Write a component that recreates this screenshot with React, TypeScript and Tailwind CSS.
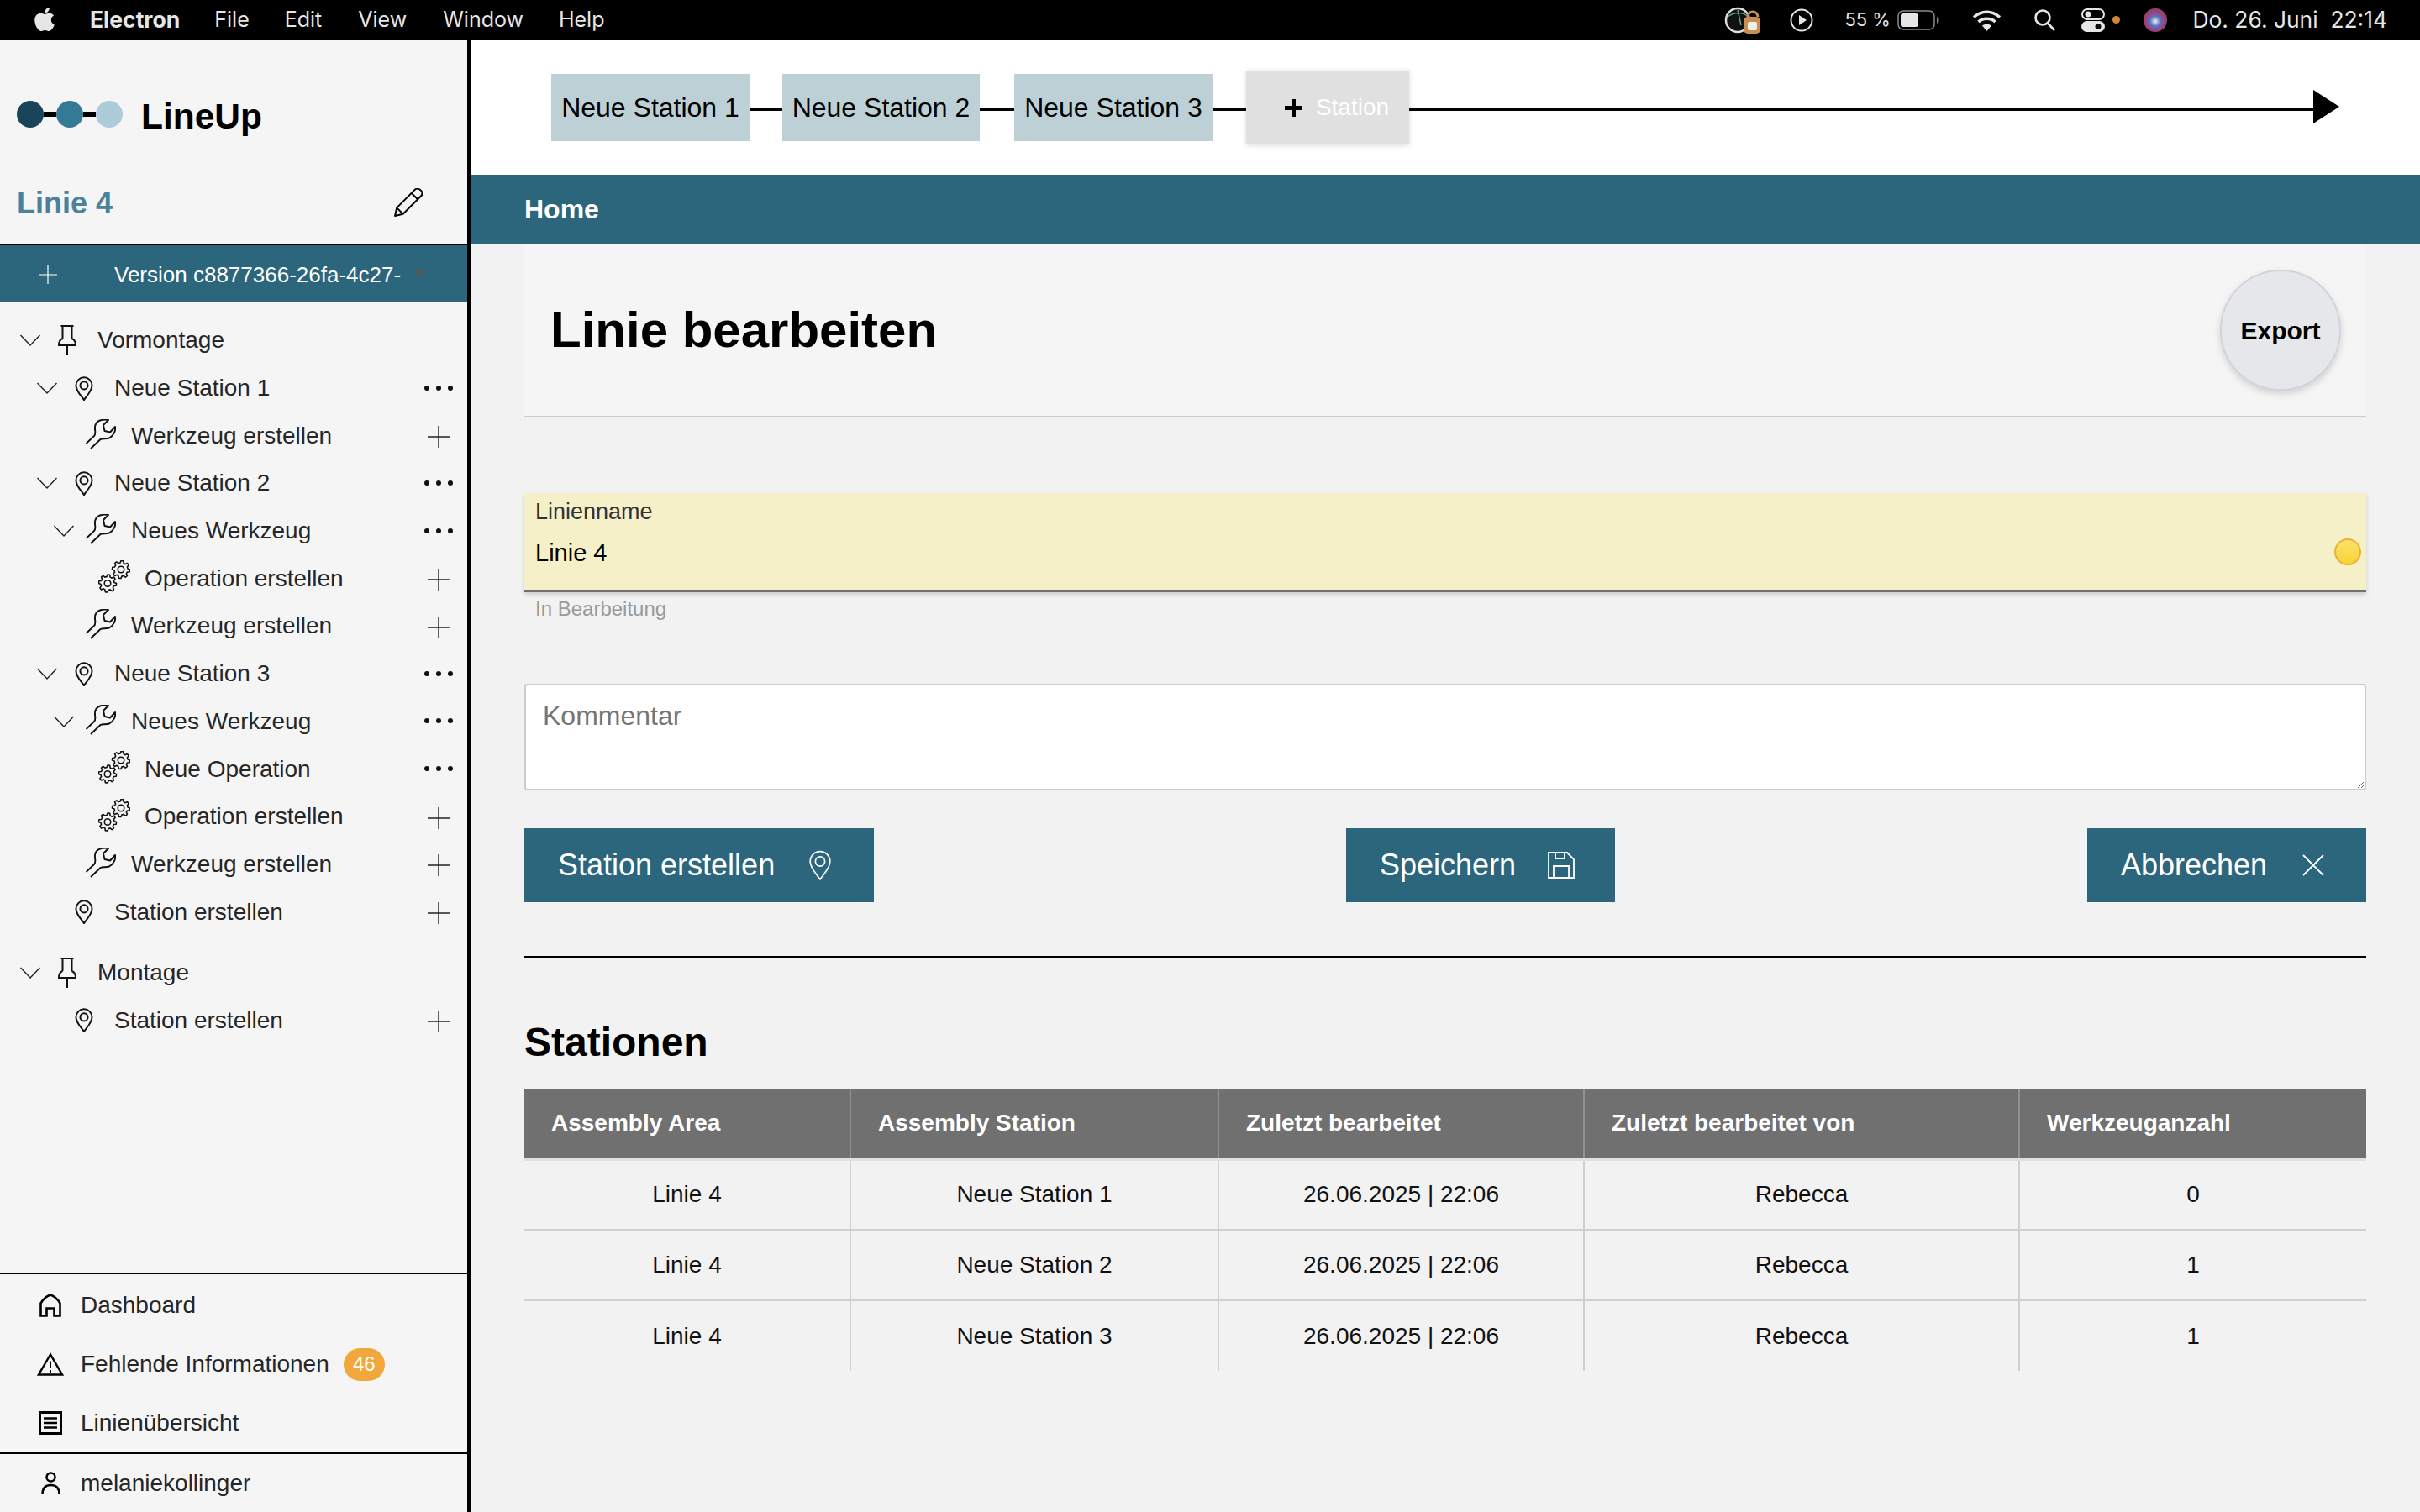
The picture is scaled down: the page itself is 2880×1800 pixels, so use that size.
import React from "react";
import { FaApple } from "react-icons/fa";

const SANS = "font-['Liberation_Sans',Arial,sans-serif]";

function Pin({ className = "" }: { className?: string }) {
  return (
    <svg viewBox="0 0 22 36" className={className} fill="none" stroke="currentColor" strokeWidth="2">
      <path d="M3.500 1h15M5.500 1v15M16.500 1v15M5.500 16C3 17 1 19.500 1 24h20c0-4.500-2-7-4.500-8M11 24v12" />
    </svg>
  );
}
function Marker({ className = "", sw = 2.2 }: { className?: string; sw?: number }) {
  return (
    <svg viewBox="0 0 24 32" className={className} fill="none" stroke="currentColor" strokeWidth={sw}>
      <path d="M12 31C8 25 1.500 19 1.500 12a10.500 10.500 0 0 1 21 0C22.500 19 16 25 12 31z" />
      <circle cx="12" cy="12" r="5" />
    </svg>
  );
}
function Wrench({ className = "" }: { className?: string }) {
  return (
    <svg viewBox="0 0 36 36" className={className} fill="none" stroke="currentColor" strokeWidth="1.900" strokeLinejoin="round">
      <path d="M.5 29 10 20C12 18 11.500 15 11 12 10.500 7 13 3 17 1.500 20 .5 24 .5 27 1L21 7 22.500 14 29 15.500 35 9C36 14 33 20 28 22.500 24 24 20 22.500 17.500 24L6 35" />
    </svg>
  );
}
function Gear({ cx, cy, r }: { cx: number; cy: number; r: number }) {
  const d = Array.from({ length: 48 }, (_, i) => {
    const a = (i / 48) * Math.PI * 2;
    const rad = i % 6 < 3 ? r : r * 0.76;
    return `${i ? "L" : "M"}${(cx + rad * Math.cos(a)).toFixed(2)} ${(cy + rad * Math.sin(a)).toFixed(2)}`;
  }).join(" ");
  return (
    <g>
      <path d={d + "z"} />
      <circle cx={cx} cy={cy} r={r * 0.36} />
    </g>
  );
}
function Gears({ className = "" }: { className?: string }) {
  return (
    <svg viewBox="0 0 38 39" className={className} fill="none" stroke="currentColor" strokeWidth="1.600" strokeLinejoin="round">
      <Gear cx={27} cy={11} r={10.500} />
      <Gear cx={11} cy={27.500} r={10.500} />
    </svg>
  );
}

type RowProps = {
  level: number;
  chevron?: boolean;
  icon: "pin" | "marker" | "wrench" | "gears";
  label: string;
  action?: "dots" | "plus";
};

function TreeRow({ level, chevron, icon, label, action }: RowProps) {
  const pad = ["pl-[24px]", "pl-[44px]", "pl-[64px]", "pl-[84px]"][level];
  return (
    <div className={`flex h-[56.7px] items-center ${pad} pr-[17px] text-[28px] text-[#262626]`}>
      <span className="flex w-[24px] shrink-0 items-center">
        {chevron && (
          <svg viewBox="0 0 24 14" className="h-[14px] w-[24px]" fill="none" stroke="#222" strokeWidth="1.400">
            <path d="M.5 1 12 13 23.500 1" />
          </svg>
        )}
      </span>
      {icon === "pin" && <Pin className="ml-[21px] mr-[25px] h-[36px] w-[22px] shrink-0 text-[#111]" />}
      {icon === "marker" && <Marker className="ml-[21px] mr-[25px] h-[29px] w-[22px] shrink-0 text-[#111]" />}
      {icon === "wrench" && <Wrench className="mb-[4px] ml-[14px] mr-[18px] h-[36px] w-[36px] shrink-0 text-[#111]" />}
      {icon === "gears" && <Gears className="mb-[4px] ml-[9px] mr-[17px] h-[39px] w-[38px] shrink-0 text-[#111]" />}
      <span className="flex-1 whitespace-nowrap">{label}</span>
      {action === "dots" && (
        <span className="flex w-[34px] justify-between pb-[1px]">
          <i className="h-[6px] w-[6px] rounded-full bg-[#111]" />
          <i className="h-[6px] w-[6px] rounded-full bg-[#111]" />
          <i className="h-[6px] w-[6px] rounded-full bg-[#111]" />
        </span>
      )}
      {action === "plus" && (
        <span className="mt-[3px] flex w-[34px] justify-center">
          <svg viewBox="0 0 26 26" className="h-[26px] w-[26px]" stroke="#222" strokeWidth="1.400">
            <path d="M13 0v26M0 13h26" />
          </svg>
        </span>
      )}
    </div>
  );
}

function NavRow({ icon, label, badge }: { icon: React.ReactNode; label: string; badge?: string }) {
  return (
    <div className="flex h-[70px] items-center pl-[44px] text-[28px] text-[#262626]">
      <span className="flex w-[32px] justify-center">{icon}</span>
      <span className="ml-[20px]">{label}</span>
      {badge && (
        <span className="ml-[17px] flex h-[39px] w-[49px] items-center justify-center rounded-[20px] bg-[#f2a73b] text-[24px] text-white">{badge}</span>
      )}
    </div>
  );
}

function Btn({ label, icon, w }: { label: string; icon: React.ReactNode; w: string }) {
  return (
    <button className={`flex h-[88px] items-center justify-between bg-[#2c667d] pl-[40px] text-[36px] text-white ${w}`}>
      <span>{label}</span>
      {icon}
    </button>
  );
}

const rows = ["Neue Station 1", "Neue Station 2", "Neue Station 3"];
const counts = ["0", "1", "1"];

export default function App() {
  return (
    <div className={`flex h-[1800px] w-[2880px] flex-col overflow-hidden bg-[#f2f2f2] ${SANS}`}>
      {/* macOS menu bar */}
      <div className="flex h-[48px] shrink-0 items-center justify-between bg-black text-[25px] text-[#e6e6e6]">
        <div className="flex items-center font-['Inter',sans-serif]">
          <FaApple className="ml-[38px] h-[32px] w-[30px] -translate-y-[1px] text-[#e6e6e6]" />
          <span className="ml-[39px] text-[26.500px] font-bold">Electron</span>
          <span className="ml-[41px]">File</span>
          <span className="ml-[42px]">Edit</span>
          <span className="ml-[43px]">View</span>
          <span className="ml-[43px]">Window</span>
          <span className="ml-[42px]">Help</span>
        </div>
        <div className="flex items-center font-['Inter',sans-serif]">
          <svg viewBox="0 0 44 36" className="h-[36px] w-[44px]">
            <circle cx="16" cy="18" r="14" fill="#111" stroke="#ddd" strokeWidth="2.500" />
            <path d="M4 14c8-6 18-6 25 0M16 6l4 18" stroke="#5aa38c" strokeWidth="1.500" fill="none" />
            <path d="M28 14a6 6 0 0 1 12 0" stroke="#c98f52" strokeWidth="3" fill="none" />
            <rect x="23" y="14" width="20" height="20" rx="5" fill="#c98f52" />
            <rect x="28" y="20" width="11" height="10" rx="2" fill="#eee" />
          </svg>
          <svg viewBox="0 0 28 28" className="ml-[34px] h-[28px] w-[28px]">
            <circle cx="14" cy="14" r="12.500" fill="none" stroke="#e6e6e6" strokeWidth="2" />
            <path d="M11 8l9 6-9 6z" fill="#e6e6e6" />
          </svg>
          <span className="ml-[37px] w-[52px] whitespace-nowrap text-[22px]">55 %</span>
          <svg viewBox="0 0 50 24" className="ml-[11px] h-[24px] w-[50px]">
            <rect x="1" y="1" width="43" height="22" rx="6" fill="none" stroke="#8a8a8a" strokeWidth="1.500" />
            <rect x="4" y="4" width="21" height="16" rx="3" fill="#e6e6e6" />
            <path d="M47 8c2 1 2 7 0 8z" fill="#8a8a8a" />
          </svg>
          <svg viewBox="0 0 35 26" className="ml-[39px] h-[26px] w-[35px]" fill="none" stroke="#e6e6e6" strokeWidth="3.500">
            <path d="M2 9.500C11 1 24 1 33 9.500M7.500 15C13 10 22 10 27.500 15" />
            <path d="M12 19.500c3-2.500 8-2.500 11 0L17.500 26z" fill="#e6e6e6" stroke="none" />
          </svg>
          <svg viewBox="0 0 25 26" className="ml-[39px] h-[26px] w-[25px]" fill="none" stroke="#e6e6e6" strokeWidth="2.600">
            <circle cx="10" cy="10" r="8.500" />
            <path d="M16 16.500 24 25" />
          </svg>
          <svg viewBox="0 0 28 28" className="ml-[31px] h-[28px] w-[28px]">
            <rect x="1" y="1" width="26" height="12" rx="6" fill="none" stroke="#e6e6e6" strokeWidth="2" />
            <circle cx="8" cy="7" r="3.500" fill="#e6e6e6" />
            <rect x="0" y="15" width="28" height="13" rx="6.500" fill="#e6e6e6" />
            <circle cx="20" cy="21.500" r="3.500" fill="#111" />
          </svg>
          <span className="ml-[9px] h-[9px] w-[9px] rounded-full bg-[#c98a32]" />
          <span className="ml-[28px] h-[28px] w-[28px] rounded-full bg-[radial-gradient(circle_at_50%_55%,#f2f2f2_0%,#5a6fc0_30%,#a8386a_60%,#2f7f80_100%)]" />
          <span className="ml-[30px] mr-[39px] whitespace-pre text-[26.400px]">Do. 26. Juni  22:14</span>
        </div>
      </div>

      <div className="flex min-h-0 flex-1">
        {/* Sidebar */}
        <aside className="flex w-[560px] shrink-0 flex-col border-r-[4px] border-black bg-[#f5f5f5]">
          <div className="flex h-[136px] shrink-0 items-start pl-[20px] pt-[72px]">
            <div className="flex items-center">
              <i className="h-[32px] w-[32px] rounded-full bg-[#1a4459]" />
              <i className="h-[6px] w-[15px] bg-black" />
              <i className="h-[32px] w-[32px] rounded-full bg-[#357a94]" />
              <i className="h-[6px] w-[15px] bg-black" />
              <i className="h-[32px] w-[32px] rounded-full bg-[#aecbda]" />
            </div>
            <span className="ml-[22px] -mt-[6px] text-[42.500px] font-bold leading-[50px] text-black">LineUp</span>
          </div>
          <div className="flex h-[106px] shrink-0 items-start justify-between pl-[20px] pr-[53px] pt-[38px]">
            <span className="text-[36px] font-bold leading-[40px] text-[#4a829b]">Linie 4</span>
            <svg viewBox="0 0 32 32" className="mt-[2px] h-[34px] w-[34px]" fill="none" stroke="#000" strokeWidth="1.900" strokeLinejoin="round">
              <path d="M1 31 3 22 23 2C25 0 28 .5 30 2.500S32 7 30 9L10 29zM3 22l7 7M19.500 5.500l7 7" />
            </svg>
          </div>
          <div className="flex h-[70px] shrink-0 items-center border-t-[2px] border-black bg-[#2c667d] pt-[2px] text-[26px] text-white">
            <svg viewBox="0 0 22 22" className="ml-[46px] h-[22px] w-[22px]" stroke="#fff" strokeWidth="1.200">
              <path d="M11 0v22M0 11h22" />
            </svg>
            <span className="ml-[68px] whitespace-nowrap">Version c8877366-26fa-4c27-</span>
            <i className="ml-[16px] h-0 w-0 border-x-[7px] border-t-[10px] border-x-transparent border-t-[#4d5a60]" />
          </div>

          <div className="flex-1 pt-[17px]">
            <TreeRow level={0} chevron icon="pin" label="Vormontage" />
            <TreeRow level={1} chevron icon="marker" label="Neue Station 1" action="dots" />
            <TreeRow level={2} icon="wrench" label="Werkzeug erstellen" action="plus" />
            <TreeRow level={1} chevron icon="marker" label="Neue Station 2" action="dots" />
            <TreeRow level={2} chevron icon="wrench" label="Neues Werkzeug" action="dots" />
            <TreeRow level={3} icon="gears" label="Operation erstellen" action="plus" />
            <TreeRow level={2} icon="wrench" label="Werkzeug erstellen" action="plus" />
            <TreeRow level={1} chevron icon="marker" label="Neue Station 3" action="dots" />
            <TreeRow level={2} chevron icon="wrench" label="Neues Werkzeug" action="dots" />
            <TreeRow level={3} icon="gears" label="Neue Operation" action="dots" />
            <TreeRow level={3} icon="gears" label="Operation erstellen" action="plus" />
            <TreeRow level={2} icon="wrench" label="Werkzeug erstellen" action="plus" />
            <TreeRow level={1} icon="marker" label="Station erstellen" action="plus" />
            <div className="h-[16px]" />
            <TreeRow level={0} chevron icon="pin" label="Montage" />
            <TreeRow level={1} icon="marker" label="Station erstellen" action="plus" />
          </div>

          <div className="border-t-[2px] border-black pt-[2px]">
            <NavRow
              label="Dashboard"
              icon={
                <svg viewBox="0 0 26 28" className="h-[28px] w-[26px]" fill="none" stroke="#000" strokeWidth="2.600">
                  <path d="M13 1.500C9 3 4 7 1.500 11.500V26.500H8.500V17.500H17.500V26.500H24.500V11.500C22 7 17 3 13 1.500z" />
                </svg>
              }
            />
            <NavRow
              label="Fehlende Informationen"
              badge="46"
              icon={
                <svg viewBox="0 0 32 28" className="h-[28px] w-[32px]" fill="none" stroke="#000" strokeWidth="2.400">
                  <path d="M16 2.500 2 26.500H30z" />
                  <path d="M16 10.500V19M16 21V24" strokeWidth="2" />
                </svg>
              }
            />
            <NavRow
              label="Linienübersicht"
              icon={
                <svg viewBox="0 0 28 28" className="h-[28px] w-[28px]" fill="none" stroke="#000" strokeWidth="3">
                  <rect x="1.500" y="1.500" width="25" height="25" />
                  <path d="M6 8.500H22M6 14H22M6 19.500H22" strokeWidth="2.400" />
                </svg>
              }
            />
          </div>
          <div className="flex h-[71px] items-center border-t-[2px] border-black pl-[44px] text-[28px] text-[#262626]">
            <span className="flex w-[32px] justify-center">
              <svg viewBox="0 0 23 27" className="h-[27px] w-[23px]" fill="none" stroke="#000" strokeWidth="2.500">
                <circle cx="11.500" cy="6.500" r="5" />
                <path d="M1.500 27C1.500 20 5 16 11.500 16S21.500 20 21.500 27" />
              </svg>
            </span>
            <span className="ml-[20px]">melaniekollinger</span>
          </div>
        </aside>

        {/* Main */}
        <main className="flex min-w-0 flex-1 flex-col">
          <div className="flex h-[160px] shrink-0 items-center bg-white pl-[96px] pr-[96px] text-[32px] text-black">
            <div className="flex h-[80px] w-[236px] items-center justify-center bg-[#bdd0d6]">Neue Station 1</div>
            <div className="mt-[4px] h-[4px] w-[39px] bg-black" />
            <div className="flex h-[80px] w-[235px] items-center justify-center bg-[#bdd0d6]">Neue Station 2</div>
            <div className="mt-[4px] h-[4px] w-[41px] bg-black" />
            <div className="flex h-[80px] w-[236px] items-center justify-center bg-[#bdd0d6]">Neue Station 3</div>
            <div className="mt-[4px] h-[4px] w-[40px] bg-black" />
            <div className="flex h-[88px] w-[194px] items-center justify-center gap-[16px] bg-[#e0e0e0] pl-[22px] text-[28px] text-white shadow-[0_1px_6px_rgba(0,0,0,0.15)]">
              <svg viewBox="0 0 21 21" className="h-[21px] w-[21px]" stroke="#000" strokeWidth="5">
                <path d="M10.500 0v21M0 10.500h21" />
              </svg>
              <span>Station</span>
            </div>
            <div className="mt-[4px] h-[4px] flex-1 bg-black" />
            <i className="mb-[2px] h-0 w-0 border-y-[20px] border-l-[31px] border-y-transparent border-l-black" />
          </div>
          <div className="flex h-[82px] shrink-0 items-center bg-[#2c667d] pl-[64px] text-[32px] font-bold text-white">Home</div>

          <div className="flex-1 px-[64px]">
            <div className="flex h-[207px] items-center justify-between border-b-[2px] border-[#cccccc] bg-[#f5f5f5] pl-[31px] pr-[30px]">
              <h1 className="text-[60px] font-bold text-black">Linie bearbeiten</h1>
              <button className="flex h-[144px] w-[144px] items-center justify-center rounded-full border-[2px] border-[#d1d5db] bg-[#e5e7eb] pt-[1px] text-[30px] font-bold text-black shadow-[0_4px_8px_rgba(0,0,0,0.15)]">Export</button>
            </div>

            <div className="relative mt-[90px] flex h-[118px] flex-col border-b-[3px] border-[#6f6f6f] bg-[#f6f0c9] pl-[13px] shadow-[0_3px_5px_rgba(0,0,0,0.15)]">
              <label className="mt-[6px] text-[27px] leading-[32px] text-[#333]">Linienname</label>
              <span className="mt-[16px] text-[29px] leading-[34px] text-black">Linie 4</span>
              <i className="absolute right-[6px] top-[54px] h-[32px] w-[32px] rounded-full border-[2px] border-[#e8b23a] bg-gradient-to-b from-[#f9e36b] to-[#fbd233]" />
            </div>
            <div className="mt-[6px] pl-[13px] text-[24px] leading-[28px] text-[#9a9a9a]">In Bearbeitung</div>

            <textarea
              placeholder="Kommentar"
              className="mt-[75px] block h-[127px] w-full rounded-[4px] border-[2px] border-[#cccccc] bg-white px-[20px] py-[16px] text-[32px] leading-[40px] outline-none placeholder:text-[#757575]"
            />

            <div className="mt-[45px] flex justify-between">
              <Btn label="Station erstellen" w="w-[416px] pr-[50px]" icon={<Marker sw={1.500} className="h-[36px] w-[28px] text-white" />} />
              <Btn
                label="Speichern"
                w="w-[320px] pr-[48px]"
                icon={
                  <svg viewBox="0 0 32 32" className="h-[32px] w-[32px]" fill="none" stroke="#fff" strokeWidth="1.800">
                    <path d="M1 1H23L31 9V31H1zM9 1V8H20V1M7 31V17H25V31" />
                  </svg>
                }
              />
              <Btn
                label="Abbrechen"
                w="w-[332px] pr-[50px]"
                icon={
                  <svg viewBox="0 0 26 26" className="h-[26px] w-[26px]" stroke="#fff" strokeWidth="1.800">
                    <path d="M1 1l24 24M25 1 1 25" />
                  </svg>
                }
              />
            </div>

            <div className="mt-[64px] h-[2px] bg-black" />

            <h2 className="mt-[73px] text-[48px] font-bold leading-[56px] text-black">Stationen</h2>

            <table className="mt-[27px] w-full table-fixed border-collapse text-[28px]">
              <colgroup>
                <col className="w-[388px]" />
                <col className="w-[438px]" />
                <col className="w-[435px]" />
                <col className="w-[518px]" />
                <col className="w-[413px]" />
              </colgroup>
              <thead>
                <tr className="h-[84px] border-b-[3px] border-[#e0e0e0] bg-[#707070] text-left text-white">
                  {["Assembly Area", "Assembly Station", "Zuletzt bearbeitet", "Zuletzt bearbeitet von", "Werkzeuganzahl"].map((t, i) => (
                    <th key={t} className={`pl-[32px] font-bold ${i < 4 ? "border-r-[2px] border-[#919191]" : ""}`}>{t}</th>
                  ))}
                </tr>
              </thead>
              <tbody>
                {rows.map((r, i) => (
                  <tr key={r} className={`h-[84px] text-center text-[#111] ${i < 2 ? "border-b-[2px] border-[#d0d0d0]" : ""}`}>
                    <td className="border-r-[2px] border-[#d0d0d0]">Linie 4</td>
                    <td className="border-r-[2px] border-[#d0d0d0]">{r}</td>
                    <td className="border-r-[2px] border-[#d0d0d0]">26.06.2025 | 22:06</td>
                    <td className="border-r-[2px] border-[#d0d0d0]">Rebecca</td>
                    <td>{counts[i]}</td>
                  </tr>
                ))}
              </tbody>
            </table>
          </div>
        </main>
      </div>
    </div>
  );
}
